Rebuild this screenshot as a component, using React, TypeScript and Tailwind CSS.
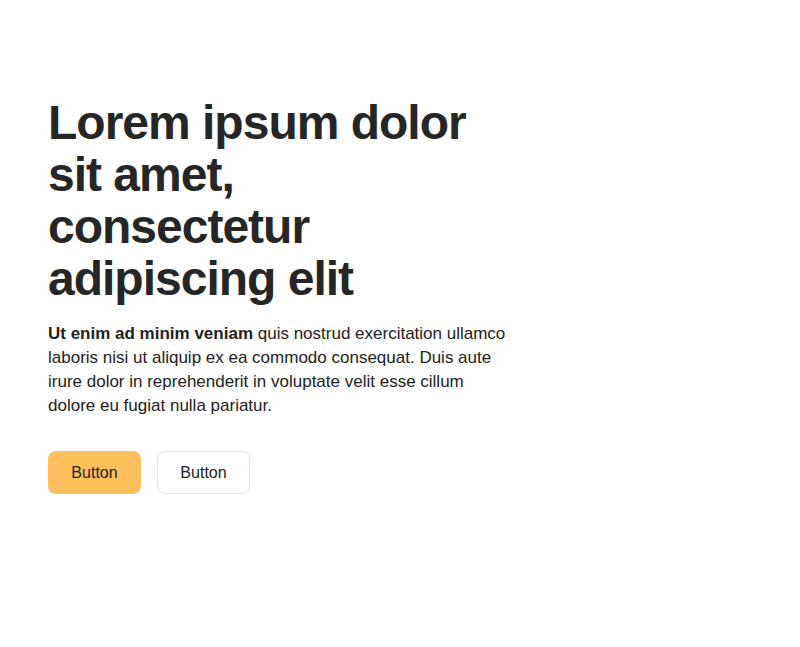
export default function App() {
  return (
    <div className="min-h-[647px] w-[800px] bg-white" style={{ fontFamily: '"Liberation Sans", Arial, sans-serif' }}>
      <div className="pl-12 pt-[97px] w-[512px]">
        <h1 className="max-w-[440px] text-[48px] leading-[52px] font-bold text-[#262626] tracking-[-1px]">
          Lorem ipsum dolor sit amet, consectetur adipiscing elit
        </h1>
        <p className="mt-[17px] text-[17px] leading-[24px] text-[#222222]">
          <span className="font-bold">Ut enim ad minim veniam</span> quis nostrud exercitation ullamco laboris nisi ut aliquip ex ea commodo consequat. Duis aute irure dolor in reprehenderit in voluptate velit esse cillum dolore eu fugiat nulla pariatur.
        </p>
        <div className="mt-[33px] flex gap-4">
          <button className="h-[43px] w-[93px] rounded-lg bg-[#ffbf5c] text-[16px] text-[#222222]">Button</button>
          <button className="h-[43px] w-[93px] rounded-lg border border-[#e5e5e5] bg-white text-[16px] text-[#222222]">Button</button>
        </div>
      </div>
    </div>
  );
}
